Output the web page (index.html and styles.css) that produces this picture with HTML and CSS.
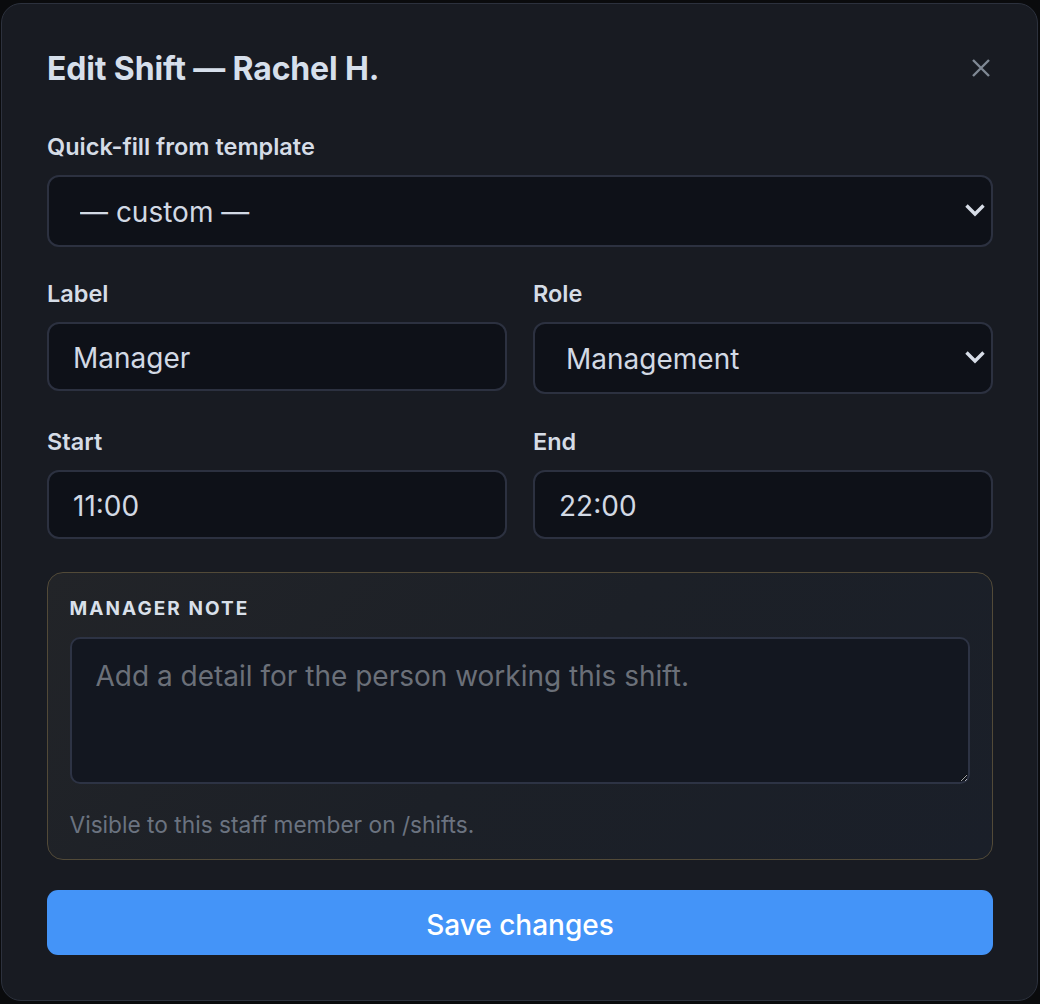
FILE: index.html
```html
<!DOCTYPE html>
<html lang="en">
<head>
<meta charset="utf-8">
<title>Edit Shift</title>
<link rel="stylesheet" href="styles.css">
</head>
<body>
<div class="backdrop">
  <div class="modal">
    <div class="modal-head">
      <h2 class="title">Edit Shift — Rachel H.</h2>
      <button class="close" aria-label="Close">
        <svg width="20" height="20" viewBox="0 0 20 20"><path d="M2 2 L18 18 M18 2 L2 18" stroke="#7f8894" stroke-width="2.4" stroke-linecap="butt" fill="none"/></svg>
      </button>
    </div>

    <div class="field first">
      <label class="label">Quick-fill from template</label>
      <div class="select-wrap">
        <select class="control select"><option>— custom —</option></select>
        <svg class="chev" width="20" height="14" viewBox="0 0 20 14"><path d="M1.5 2.5 L10 11 L18.5 2.5" stroke="#d7dde7" stroke-width="3.4" fill="none"/></svg>
      </div>
    </div>

    <div class="grid">
      <div class="field">
        <label class="label">Label</label>
        <input class="control input" value="Manager">
      </div>
      <div class="field">
        <label class="label">Role</label>
        <div class="select-wrap">
          <select class="control select"><option>Management</option></select>
          <svg class="chev" width="20" height="14" viewBox="0 0 20 14"><path d="M1.5 2.5 L10 11 L18.5 2.5" stroke="#d7dde7" stroke-width="3.4" fill="none"/></svg>
        </div>
      </div>
      <div class="field">
        <label class="label">Start</label>
        <input class="control input" value="11:00">
      </div>
      <div class="field">
        <label class="label">End</label>
        <input class="control input" value="22:00">
      </div>
    </div>

    <div class="note">
      <div class="note-title">MANAGER NOTE</div>
      <textarea class="note-text" placeholder="Add a detail for the person working this shift."></textarea>
      <div class="note-hint">Visible to this staff member on /shifts.</div>
    </div>

    <button class="save">Save changes</button>
  </div>
</div>
</body>
</html>
```
FILE: styles.css
```css
* { box-sizing: border-box; }
html, body { margin: 0; padding: 0; }
body {
  background: #0a0b0d;
  font-family: Inter, "Noto Sans", sans-serif;
  width: 1040px;
  height: 1004px;
  overflow: hidden;
}
.backdrop {
  padding: 3px 2px 0 1px;
}
.modal {
  width: 1037px;
  height: 998px;
  background: #181b22;
  border: 1px solid #2c313d;
  border-radius: 20px;
  padding: 46px 44px 0 45px;
  display: flex;
  flex-direction: column;
}
.modal-head {
  display: flex;
  align-items: center;
  justify-content: space-between;
}
.title {
  margin: 0;
  font-size: 32px;
  line-height: 38px;
  font-weight: 700;
  color: #d6dfeb;
  letter-spacing: -0.15px;
}
.close {
  background: none;
  border: 0;
  padding: 0;
  margin-right: 2px;
  margin-top: -3px;
  width: 20px;
  height: 20px;
  display: flex;
  cursor: pointer;
}
.field {
  display: flex;
  flex-direction: column;
}
.field.first { margin-top: 43px; }
.label {
  font-size: 23.5px;
  line-height: 32px;
  font-weight: 600;
  color: #d5dce6;
  margin-bottom: 12px;
}
.control {
  font-family: Inter, "Noto Sans", sans-serif;
  font-size: 28px;
  color: #d2d9e4;
  background: #0e1118;
  border: 2px solid #2c3140;
  border-radius: 12px;
  outline: none;
  width: 100%;
}
.input {
  height: 69px;
  padding: 2px 24px 0;
}
.select-wrap {
  position: relative;
}
.select {
  appearance: none;
  -webkit-appearance: none;
  height: 72px;
  padding: 2px 60px 0 31px;
}
.chev {
  position: absolute;
  top: 28px;
  right: 8px;
  pointer-events: none;
}
.grid {
  margin-top: 31px;
  display: grid;
  grid-template-columns: 1fr 1fr;
  column-gap: 26px;
  row-gap: 32px;
  align-items: start;
}
.note {
  margin-top: 33px;
  border: 1.5px solid #524a38;
  border-radius: 16px;
  background: linear-gradient(135deg, #222428 0%, #1c2027 50%, #1a1f29 100%);
  padding: 24px 22px 0 21.5px;
  display: flex;
  flex-direction: column;
  height: 288px;
}
.note-title {
  font-size: 19px;
  line-height: 24px;
  font-weight: 700;
  letter-spacing: 2.05px;
  color: #d9e0ea;
}
.note-text {
  margin-top: 16px;
  height: 147px;
  width: 100%;
  background: #131720;
  border: 2px solid #2d3344;
  border-radius: 10px;
  padding: 19px 24px 17px;
  font-family: Inter, "Noto Sans", sans-serif;
  font-size: 28px;
  line-height: 36px;
  color: #d2d9e4;
  resize: vertical;
  outline: none;
}
.note-text::placeholder { color: #6b7079; }
.note-hint {
  margin-top: 27px;
  font-size: 22.7px;
  line-height: 28px;
  color: #6b7380;
}
.save {
  margin-top: 30px;
  height: 65px;
  width: 100%;
  padding: 4px 0 0;
  background: #4494f8;
  border: 0;
  border-radius: 11px;
  color: #ffffff;
  font-family: Inter, "Noto Sans", sans-serif;
  font-size: 28px;
  font-weight: 500;
  cursor: pointer;
}
```
